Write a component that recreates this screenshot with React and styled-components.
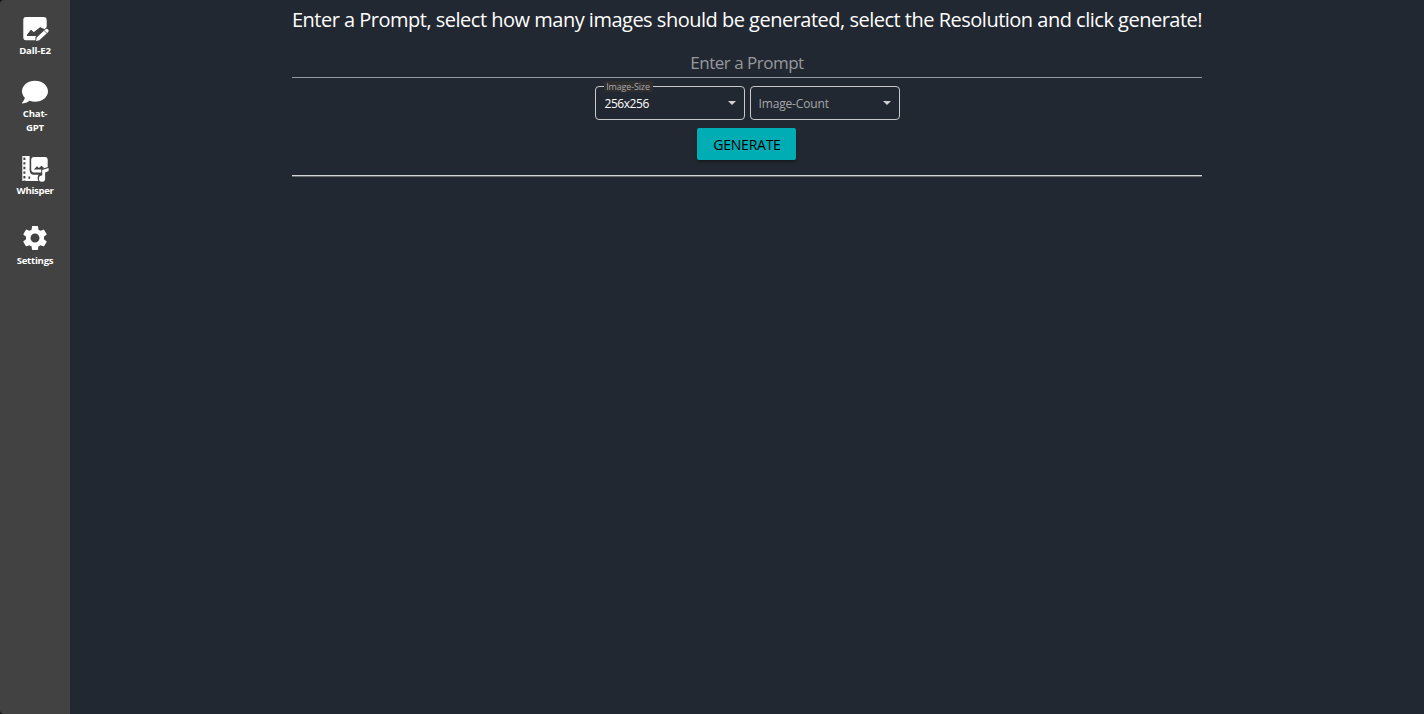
import React from "react";
import styled, { createGlobalStyle } from "styled-components";
import { FaComment } from "react-icons/fa";
import { MdSettings } from "react-icons/md";

const GlobalStyle = createGlobalStyle`
  *, *::before, *::after { box-sizing: border-box; }
  body {
    margin: 0;
    background: #222831;
    color: #fff;
    font-family: "Segoe UI", "Open Sans", "Noto Sans", sans-serif;
  }
`;

const Shell = styled.div`
  display: flex;
  height: 100vh;
  overflow: hidden;
  background: linear-gradient(90deg, #121212 35px, #222831 35px);
`;

const Sidebar = styled.nav`
  flex: 0 0 70px;
  display: flex;
  flex-direction: column;
  background: #424242;
  border-radius: 4px 0 0 4px;
`;

const NavItem = styled.a`
  display: flex;
  flex-direction: column;
  align-items: center;
  height: ${(p) => p.$height}px;
  padding: ${(p) => p.$top}px 10px 0;
  color: #fff;
  text-decoration: none;

  svg { display: block; flex: none; }
`;

const NavLabel = styled.span`
  margin-top: ${(p) => p.$gap || 1}px;
  width: 44px;
  text-align: center;
  font-size: 9.6px;
  font-weight: 700;
  line-height: 14px;
  letter-spacing: ${(p) => p.$spacing || 0}px;
`;

const Main = styled.main`
  flex: 1;
  display: flex;
  flex-direction: column;
  align-items: center;
  background: #222831;
`;

const Form = styled.form`
  width: 910px;
  display: flex;
  flex-direction: column;
  align-items: center;
`;

const Heading = styled.h1`
  margin: 4px 0 0;
  height: 32px;
  font-size: 20px;
  font-weight: 400;
  line-height: 32px;
  letter-spacing: -0.5px;
  white-space: nowrap;
`;

const Prompt = styled.div`
  width: 100%;
  height: 42px;
  padding-top: 14px;
  border-bottom: 1px solid #96999d;
  color: #96999d;
  text-align: center;
  font-size: 17px;
  line-height: 26px;
  letter-spacing: -0.5px;
`;

const Selects = styled.div`
  display: flex;
  gap: 5px;
  margin-top: 8px;
`;

const Field = styled.div`
  position: relative;
  display: flex;
  align-items: center;
  justify-content: space-between;
  width: 150px;
  height: 34px;
  padding: 0 8px 0 ${(p) => (p.$filled ? 9 : 8)}px;
  border: 1px solid #c8c9cb;
  border-radius: 4px;
  color: ${(p) => (p.$filled ? "#fff" : "#a4a7aa")};
  font-size: 12px;
  letter-spacing: ${(p) => (p.$filled ? -0.45 : -0.16)}px;
`;

const FloatingLabel = styled.span`
  position: absolute;
  left: 8px;
  top: -6px;
  width: 49px;
  height: 11px;
  background: #2e2e2e;
  color: #a9a9a9;
  text-align: center;
  font-size: 9px;
  line-height: 11px;
  letter-spacing: -0.15px;
  white-space: nowrap;
`;

const Arrow = styled.span`
  border: 4px solid transparent;
  border-top-color: #d0d1d3;
  border-bottom: 0;
`;

const GenerateButton = styled.button`
  width: 99px;
  height: 32px;
  margin: 8px 1px 0 0;
  padding: 2px 0 0 1px;
  border: 0;
  border-radius: 2px;
  background: #00adb5;
  color: #000;
  font: 500 14px/20px "Segoe UI", "Open Sans", "Noto Sans", sans-serif;
  letter-spacing: -0.25px;
  box-shadow: 0 2px 3px rgba(0, 0, 0, 0.35);
`;

const Divider = styled.hr`
  width: 100%;
  height: 2px;
  margin: 15px 0 0;
  border: 0;
  border-top: 1px solid #d4d5d6;
  border-bottom: 1px solid #66696e;
`;

function ImageEditIcon() {
  return (
    <svg width="28" height="28" viewBox="0 0 28 28" fill="none">
      <path d="M5 2H22.5Q25.7 2 25.7 5.2V12L22.5 15.5L19.2 12.2L14.6 16.8L12.8 17.2L10 14.8L6 19.8V20.3H16L14.4 22V25.2H5Q2.3 25.2 2.3 22.3V5Q2.3 2 5 2Z" fill="currentColor" />
      <path d="M6 20.2L9.8 15.2L12.6 17.2L19.2 12.2L24 14.2L17 21H6Z" fill="#424242" />
      <path d="M15 26L15.7 22.4L24.5 14.3Q26 13.3 27.1 14.6T27 17.2L18.3 25.3Z" fill="currentColor" />
      <path d="M23 15.5L26 18.3" stroke="#424242" strokeWidth=".7" />
    </svg>
  );
}

function MediaIcon() {
  return (
    <svg width="28" height="28" viewBox="0 0 28 28" fill="none">
      <path d="M1.3 1H8.6V15Q8.6 19.7 13 19.7H17.6Q16.6 21.2 16.6 23T17.6 26H1.3Z" fill="currentColor" />
      <path d="M3.4 2.6V26" stroke="#424242" strokeWidth="2" strokeDasharray="2.4 2.2" />
      <path d="M8.3 21.5V23.8" stroke="#424242" strokeWidth="1.7" />
      <path d="M10.2 5Q10.2 2 13 2H24Q26.7 2 26.7 5V12L20.2 14.2V17.4H13Q10.2 17.4 10.2 14.6Z" fill="currentColor" />
      <path d="M12.8 14.4L16 11.2L17.9 13L20.4 10.7L23.4 13.2L20.2 14.4Z" fill="#424242" />
      <path d="M21.2 15L27.6 12.9V16L24.1 17.4V23.5A3.1 3.1 0 1 1 21.2 20.5Z" fill="currentColor" />
    </svg>
  );
}

export default function App() {
  return (
    <>
      <GlobalStyle />
      <Shell>
        <Sidebar>
          <NavItem $height={70} $top={15}>
            <ImageEditIcon />
            <NavLabel $spacing={-0.15}>Dall-E2</NavLabel>
          </NavItem>
          <NavItem $height={70} $top={9}>
            <FaComment size={26} />
            <NavLabel $gap={2} $spacing={-0.2}>Chat-<br />GPT</NavLabel>
          </NavItem>
          <NavItem $height={70} $top={15}>
            <MediaIcon />
            <NavLabel $spacing={-0.35}>Whisper</NavLabel>
          </NavItem>
          <NavItem $height={70} $top={13}>
            <MdSettings size={30} />
            <NavLabel $spacing={-0.25}>Settings</NavLabel>
          </NavItem>
        </Sidebar>
        <Main>
          <Form>
            <Heading>
              Enter a Prompt, select how many images should be generated, select the Resolution and click generate!
            </Heading>
            <Prompt>Enter a Prompt</Prompt>
            <Selects>
              <Field $filled>
                <FloatingLabel>Image-Size</FloatingLabel>
                256x256
                <Arrow />
              </Field>
              <Field>
                Image-Count
                <Arrow />
              </Field>
            </Selects>
            <GenerateButton type="button">GENERATE</GenerateButton>
            <Divider />
          </Form>
        </Main>
      </Shell>
    </>
  );
}
